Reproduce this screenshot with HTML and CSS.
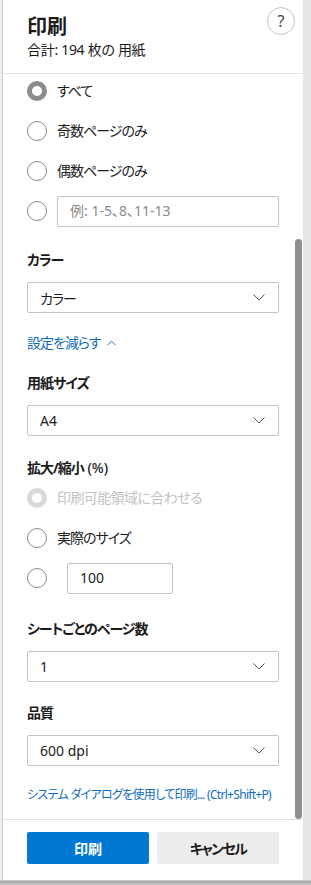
FILE: index.html
```html
<!DOCTYPE html>
<html lang="ja">
<head>
<meta charset="utf-8">
<link rel="stylesheet" href="styles.css">
</head>
<body>
<div class="stage">
  <div class="behind"></div>
  <div class="panel">
    <header class="head">
      <div class="head-text">
        <h1 class="title">印刷</h1>
        <div class="sub">合計: 194 枚の 用紙</div>
      </div>
      <div class="help">?</div>
    </header>
    <div class="body">
      <div class="scroll">
        <div class="radios first">
          <div class="row"><span class="radio on"></span><span class="jp">すべて</span></div>
          <div class="row"><span class="radio"></span><span class="jp">奇数ページのみ</span></div>
          <div class="row"><span class="radio"></span><span class="jp">偶数ページのみ</span></div>
          <div class="row"><span class="radio"></span><div class="input wide placeholder">例: 1-5、8、11-13</div></div>
        </div>

        <div class="label jp l-color">カラー</div>
        <div class="select"><span class="jp">カラー</span><svg class="chev" viewBox="0 0 12 7"><path d="M0.5 0.5 L6 6 L11.5 0.5"/></svg></div>

        <div class="link-less"><span class="jp">設定を減らす</span><svg class="up" viewBox="0 0 10 6"><path d="M0.5 5.5 L5 1 L9.5 5.5"/></svg></div>

        <div class="label jp l-paper">用紙サイズ</div>
        <div class="select"><span>A4</span><svg class="chev" viewBox="0 0 12 7"><path d="M0.5 0.5 L6 6 L11.5 0.5"/></svg></div>

        <div class="label l-scale"><span class="jp">拡大/縮小</span> <span class="pct">(%)</span></div>
        <div class="radios">
          <div class="row disabled"><span class="radio dis"></span><span class="jp-k">印刷可能領域に合わせる</span></div>
          <div class="row"><span class="radio"></span><span class="jp">実際のサイズ</span></div>
          <div class="row"><span class="radio"></span><div class="input narrow">100</div></div>
        </div>

        <div class="label jp l-pps">シートごとのページ数</div>
        <div class="select"><span>1</span><svg class="chev" viewBox="0 0 12 7"><path d="M0.5 0.5 L6 6 L11.5 0.5"/></svg></div>

        <div class="label jp l-q">品質</div>
        <div class="select"><span>600 dpi</span><svg class="chev" viewBox="0 0 12 7"><path d="M0.5 0.5 L6 6 L11.5 0.5"/></svg></div>

        <div class="sys-link">システム ダイアログを使用して印刷... (Ctrl+Shift+P)</div>
      </div>
      <div class="thumb"></div>
    </div>
    <footer class="foot">
      <button class="btn primary">印刷</button>
      <button class="btn secondary"><span class="jp-b">キャンセル</span></button>
    </footer>
  </div>
</div>
</body>
</html>
```

FILE: styles.css
```css
* { box-sizing: border-box; }
html, body { margin: 0; padding: 0; }
body {
  width: 311px;
  height: 885px;
  overflow: hidden;
  background: #e6e6e6;
  font-family: "Noto Sans", "Noto Sans CJK JP", sans-serif;
  font-feature-settings: "palt";
  color: #1b1b1b;
  font-size: 14px;
}
.jp { letter-spacing: -1px; }
.jp-k { letter-spacing: -0.6px; }
.jp-b { letter-spacing: -1.6px; }
.pct { font-weight: 500; }
.stage {
  display: flex;
  height: 885px;
  background: linear-gradient(to bottom, #e6e6e6 0, #e6e6e6 880px, #a8a8a8 881px, #c8c8c8 885px);
}
.behind {
  width: 3px;
  height: 880px;
  background: #eeeeee;
  border-right: 1px solid #c9c9c9;
}
.panel {
  width: 300px;
  height: 880px;
  background: #fff;
  display: flex;
  flex-direction: column;
}
.head {
  height: 74px;
  border-bottom: 1px solid #e3e3e3;
  display: flex;
  justify-content: space-between;
  padding: 7px 8px 0 24px;
}
.head-text { padding-top: 7px; }
.title {
  margin: 0;
  font-size: 20px;
  font-weight: 700;
  line-height: 26px;
}
.sub {
  font-size: 14px;
  line-height: 20px;
  margin-top: 0;
  letter-spacing: -0.3px;
}
.help {
  width: 28px;
  height: 28px;
  border: 1px solid #c4c4c4;
  border-radius: 50%;
  display: flex;
  align-items: center;
  justify-content: center;
  font-size: 16px;
  color: #444;
}
.body {
  position: relative;
  height: 745px;
  overflow: hidden;
}
.scroll {
  padding: 0 24px;
}
.radios.first { margin-top: -3px; }
.row {
  height: 40px;
  display: flex;
  align-items: center;
  gap: 10px;
  line-height: 20px;
}
.radio {
  width: 20px;
  height: 20px;
  border-radius: 50%;
  border: 1px solid #8a8a8a;
  flex: none;
}
.radio.on { border: 5px solid #8c8c8c; }
.radio.dis { border: 5px solid #d9d9d9; }
.row.disabled { color: #c2c2c2; }
.input {
  height: 31px;
  border: 1px solid #c4c4c4;
  border-radius: 2px;
  display: flex;
  align-items: center;
  padding-left: 12px;
}
.input.wide { width: 222px; }
.input.narrow { width: 106px; margin-left: 10px; padding-left: 12px; }
.placeholder { color: #8a8a8a; }
.label {
  font-weight: 700;
  line-height: 20px;
}
.l-color { margin-top: 19px; }
.l-paper { margin-top: 20px; }
.l-scale { margin-top: 22px; }
.l-pps { margin-top: 21px; }
.l-q { margin-top: 21px; }
.select {
  margin-top: 12px;
  height: 31px;
  width: 252px;
  border: 1px solid #c4c4c4;
  border-radius: 2px;
  display: flex;
  align-items: center;
  justify-content: space-between;
  padding: 0 13px 0 12px;
}
.chev {
  width: 12px;
  height: 7px;
  fill: none;
  stroke: #555;
  stroke-width: 1;
}
.link-less {
  margin-top: 20px;
  color: #0f6cbd;
  line-height: 20px;
  display: flex;
  align-items: center;
  gap: 7px;
}
.up {
  width: 9px;
  height: 6px;
  fill: none;
  stroke: #0f6cbd;
  stroke-width: 1;
}
.sys-link {
  margin-top: 20px;
  font-size: 12px;
  line-height: 18px;
  color: #0f6cbd;
  white-space: nowrap;
  letter-spacing: -0.7px;
}
.thumb {
  position: absolute;
  right: 1px;
  top: 165px;
  width: 7px;
  height: 580px;
  background: #8f8f8f;
  border-radius: 4px;
}
.foot {
  flex: 1;
  border-top: 1px solid #e3e3e3;
  display: flex;
  gap: 8px;
  padding: 12px 24px 0 24px;
}
.btn {
  width: 122px;
  height: 32px;
  border: none;
  border-radius: 2px;
  font-family: inherit;
  font-feature-settings: "palt";
  font-size: 14px;
  font-weight: 700;
}
.primary { background: #0078d4; color: #fff; }
.secondary { background: #ececec; color: #1b1b1b; }
```
